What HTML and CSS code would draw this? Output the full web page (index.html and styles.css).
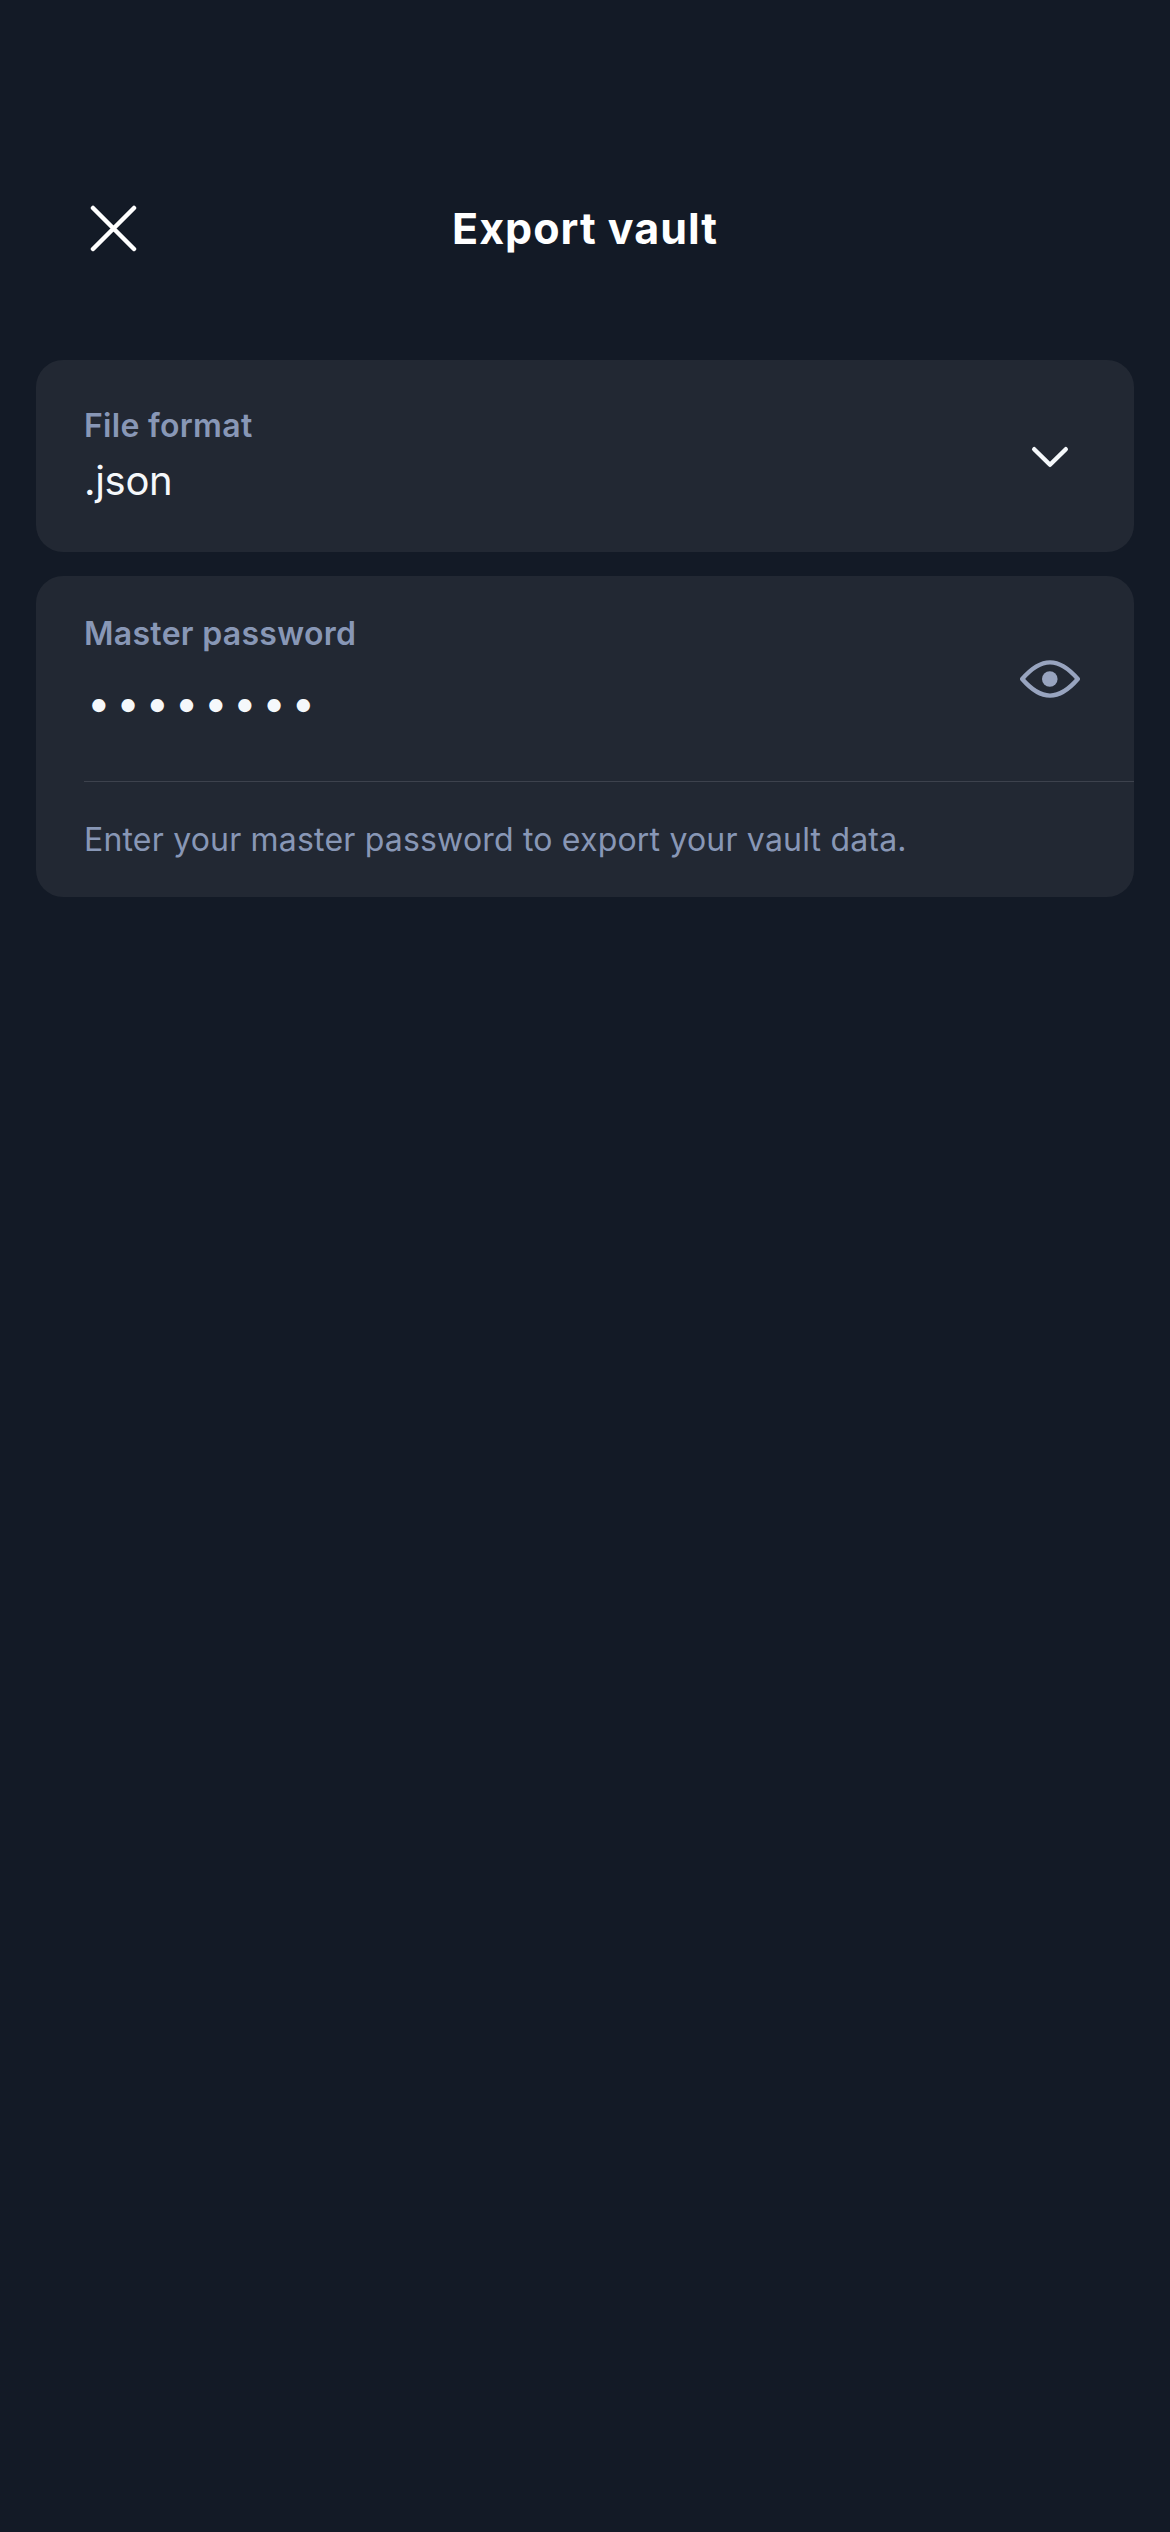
FILE: index.html
```html
<!DOCTYPE html>
<html lang="en">
<head>
<meta charset="utf-8">
<title>Export vault</title>
<link rel="stylesheet" href="styles.css">
</head>
<body>
<header class="header">
  <button class="close" aria-label="Close">
    <svg width="48" height="48" viewBox="0 0 48 48"><path d="M4 4 45 45M45 4 4 45" fill="none" stroke="#fff" stroke-width="4.5" stroke-linecap="round"/></svg>
  </button>
  <h1 class="title">Export vault</h1>
</header>
<main class="content">
  <section class="card format">
    <div class="field">
      <div class="label">File format</div>
      <div class="value">.json</div>
    </div>
    <svg class="icon" width="60" height="60" viewBox="0 0 60 60"><path d="M14.2 23.2 30 38.8 45.8 23.2" fill="none" stroke="#f5f8fb" stroke-width="4.4" stroke-linecap="round" stroke-linejoin="round"/></svg>
  </section>
  <section class="card password">
    <div class="row">
      <div class="field">
        <div class="label">Master password</div>
        <div class="dots">••••••••</div>
      </div>
      <svg class="icon" width="60" height="60" viewBox="0 0 60 60"><path d="M2.2 30C10 21 18.5 13.4 30 13.4S50 21 57.8 30C50 39 41.5 46.6 30 46.6S10 39 2.2 30Z" fill="none" stroke="#98a4bf" stroke-width="4.4" stroke-linejoin="round"/><circle cx="29.8" cy="30" r="7.8" fill="#98a4bf"/></svg>
    </div>
    <p class="hint">Enter your master password to export your vault data.</p>
  </section>
</main>
</body>
</html>
```
FILE: styles.css
```css
* { box-sizing: border-box; margin: 0; }
body {
  min-height: 2532px;
  background: #131a26;
  font-family: Inter, "Liberation Sans", sans-serif;
  color: #f5f8fb;
}
.header {
  display: grid;
  grid-template-columns: 1fr auto 1fr;
  align-items: center;
  height: 360px;
  padding: 180px 89px 84px;
}
.close {
  width: 48px;
  height: 48px;
  padding: 0;
  border: 0;
  background: none;
}
svg { display: block; }
.title {
  font-size: 43px;
  line-height: 56px;
  font-weight: 700;
  letter-spacing: 1px;
  color: #fff;
  white-space: nowrap;
}
.content {
  display: flex;
  flex-direction: column;
  gap: 24px;
  padding: 0 36px;
}
.card {
  border-radius: 27px;
  background: #222833;
}
.format {
  display: flex;
  justify-content: space-between;
  align-items: center;
  height: 192px;
  padding: 0 54px 0 48px;
}
.label {
  font-size: 32px;
  line-height: 44px;
  font-weight: 600;
  letter-spacing: 0.3px;
  color: #8897b6;
}
.value {
  margin-top: 5px;
  font-size: 40px;
  line-height: 56px;
  letter-spacing: -0.3px;
}
.password {
  height: 321px;
  padding-left: 48px;
}
.row {
  display: flex;
  justify-content: space-between;
  align-items: center;
  height: 206px;
  padding-right: 54px;
  border-bottom: 1px solid #3d424d;
}
.dots {
  margin-top: 17px;
  padding: 0 0 12px 3px;
  font-size: 42px;
  line-height: 60px;
  letter-spacing: 5.6px;
}
.hint {
  padding-top: 36px;
  font-size: 32px;
  line-height: 44px;
  letter-spacing: 0.19px;
  color: #8897b6;
  white-space: nowrap;
}
```
